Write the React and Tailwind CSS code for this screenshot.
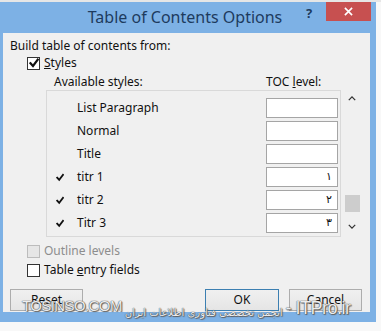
import React from 'react';

const rows = [
  { name: 'List Paragraph', checked: false, level: '' },
  { name: 'Normal', checked: false, level: '' },
  { name: 'Title', checked: false, level: '' },
  { name: 'titr 1', checked: true, level: '۱' },
  { name: 'titr 2', checked: true, level: '۲' },
  { name: 'Titr 3', checked: true, level: '۳' },
];

function Tick({ className }) {
  return (
    <svg viewBox="0 0 10 10" className={className}>
      <path d="M1.5 5.2 L4 8 L8.8 1.6" fill="none" stroke="#111" strokeWidth="2.2" strokeLinecap="square" />
    </svg>
  );
}

function CheckBox({ checked, disabled }) {
  return (
    <div
      className={
        'w-[13px] h-[13px] border flex items-center justify-center shrink-0 ' +
        (disabled ? 'border-[#bcbcbc] bg-[#e6e6e6]' : 'border-[#333] bg-white')
      }
    >
      {checked && <Tick className="w-[10px] h-[10px]" />}
    </div>
  );
}

function Button({ label, primary, className }) {
  return (
    <div
      className={
        'h-[22px] flex items-center justify-center border bg-gradient-to-b from-[#f0f0f0] to-[#e5e5e5] text-[#111] ' +
        (primary ? 'border-[#3c7fb1] ' : 'border-[#adadad] ') +
        className
      }
    >
      {label}
    </div>
  );
}

export default function App() {
  return (
    <div className="w-[381px] h-[331px] bg-[#f8f8f8] overflow-hidden relative font-['Noto_Sans','Open_Sans',sans-serif] text-[12px] leading-[16px] text-[#111]">
      <div className="h-[2px] bg-[#e6e6e6]" />
      <div className="w-[376px] h-[320px] bg-[#7db1e5] flex flex-col">
        {/* title bar */}
        <div className="h-[31px] flex items-start shrink-0">
          <div className="flex-1 pl-[64px] pt-[4px] text-center text-[16px] leading-[22px] text-[#1d3b5e]">
            Table of Contents Options
          </div>
          <div className="w-[20px] pt-[3px] text-[13px] font-bold text-[#1d3b5e] leading-[16px]">?</div>
          <div className="w-[45px] h-[19px] mr-[5px] bg-[#c75050] flex items-center justify-center">
            <svg viewBox="0 0 10 10" className="w-[9px] h-[9px]">
              <path d="M1 1 L9 9 M9 1 L1 9" stroke="#fff" strokeWidth="1.8" />
            </svg>
          </div>
        </div>

        {/* body */}
        <div className="ml-[3px] mr-[6px] h-[279px] bg-[#f0f0f0] pt-[5px] pl-[7px] pr-[8px] flex flex-col shrink-0">
          <div className="h-[16px]">Build table of contents from:</div>

          <div className="h-[16px] mt-[1px] ml-[17px] flex items-center gap-[4px]">
            <CheckBox checked />
            <span><span className="underline">S</span>tyles</span>
          </div>

          <div className="h-[16px] mt-[3px] flex">
            <span className="ml-[44px] w-[212px]">Available styles:</span>
            <span>TOC <span className="underline">l</span>evel:</span>
          </div>

          <div className="flex ml-[36px] h-[147px]">
            <div className="w-[299px] h-full border border-[#d9d9d9] pt-[7px] flex flex-col gap-[3px]">
              {rows.map((r) => (
                <div key={r.name} className="h-[20px] flex items-center">
                  <div className="w-[30px] pl-[9px]">
                    {r.checked && <Tick className="w-[8px] h-[9px]" />}
                  </div>
                  <div className="w-[189px]">{r.name}</div>
                  <div className="w-[72px] h-[20px] border border-[#a5a5a5] bg-white flex items-center justify-end pr-[5px] font-['DejaVu_Sans',sans-serif] text-[11px]">
                    {r.level}
                  </div>
                </div>
              ))}
            </div>
            <div className="w-[20px] ml-[1px] h-full flex flex-col items-center">
              <div className="h-[17px] flex items-center justify-center">
                <svg viewBox="0 0 10 6" className="w-[8px] h-[5px]">
                  <path d="M1 5 L5 1 L9 5" fill="none" stroke="#333" strokeWidth="1.6" />
                </svg>
              </div>
              <div className="flex-1 w-full flex flex-col justify-end pb-[6px] items-center">
                <div className="w-[15px] h-[17px] bg-[#cdcdcd]" />
              </div>
              <div className="h-[19px] flex items-center justify-center pb-[2px]">
                <svg viewBox="0 0 10 6" className="w-[8px] h-[5px]">
                  <path d="M1 1 L5 5 L9 1" fill="none" stroke="#333" strokeWidth="1.6" />
                </svg>
              </div>
            </div>
          </div>

          <div className="h-[16px] mt-[6px] ml-[17px] flex items-center gap-[4px] text-[#8d8d8d]">
            <CheckBox disabled />
            <span>Outline levels</span>
          </div>

          <div className="h-[16px] mt-[3px] ml-[17px] flex items-center gap-[4px]">
            <CheckBox />
            <span>Table <span className="underline">e</span>ntry fields</span>
          </div>

          <div className="mt-[11px] flex items-center">
            <Button label="Reset" className="w-[73px]" />
            <div className="flex-1" />
            <Button label="OK" primary className="w-[74px]" />
            <Button label="Cancel" className="w-[73px] ml-[10px]" />
          </div>
        </div>
      </div>

      {/* watermark overlay */}
      <div className="absolute left-[22px] top-[297px] flex items-end whitespace-nowrap text-white/90 [text-shadow:0_0_1px_#444,0_0_1px_#444,1px_1px_1px_#666] font-['Liberation_Sans',sans-serif]">
        <span className="text-[15px] leading-[18px] tracking-[-0.6px]">TOSINSO.COM</span>
        <span dir="rtl" className="text-[10px] leading-[14px] mb-[-5px] ml-[3px] font-['DejaVu_Sans',sans-serif]">
          انجمن تخصصی فناوری اطلاعات ایران
        </span>
        <span className="text-[18px] leading-[20px] ml-[3px] mb-[-3px] tracking-[-0.5px]">- ITPro.ir</span>
      </div>
    </div>
  );
}
